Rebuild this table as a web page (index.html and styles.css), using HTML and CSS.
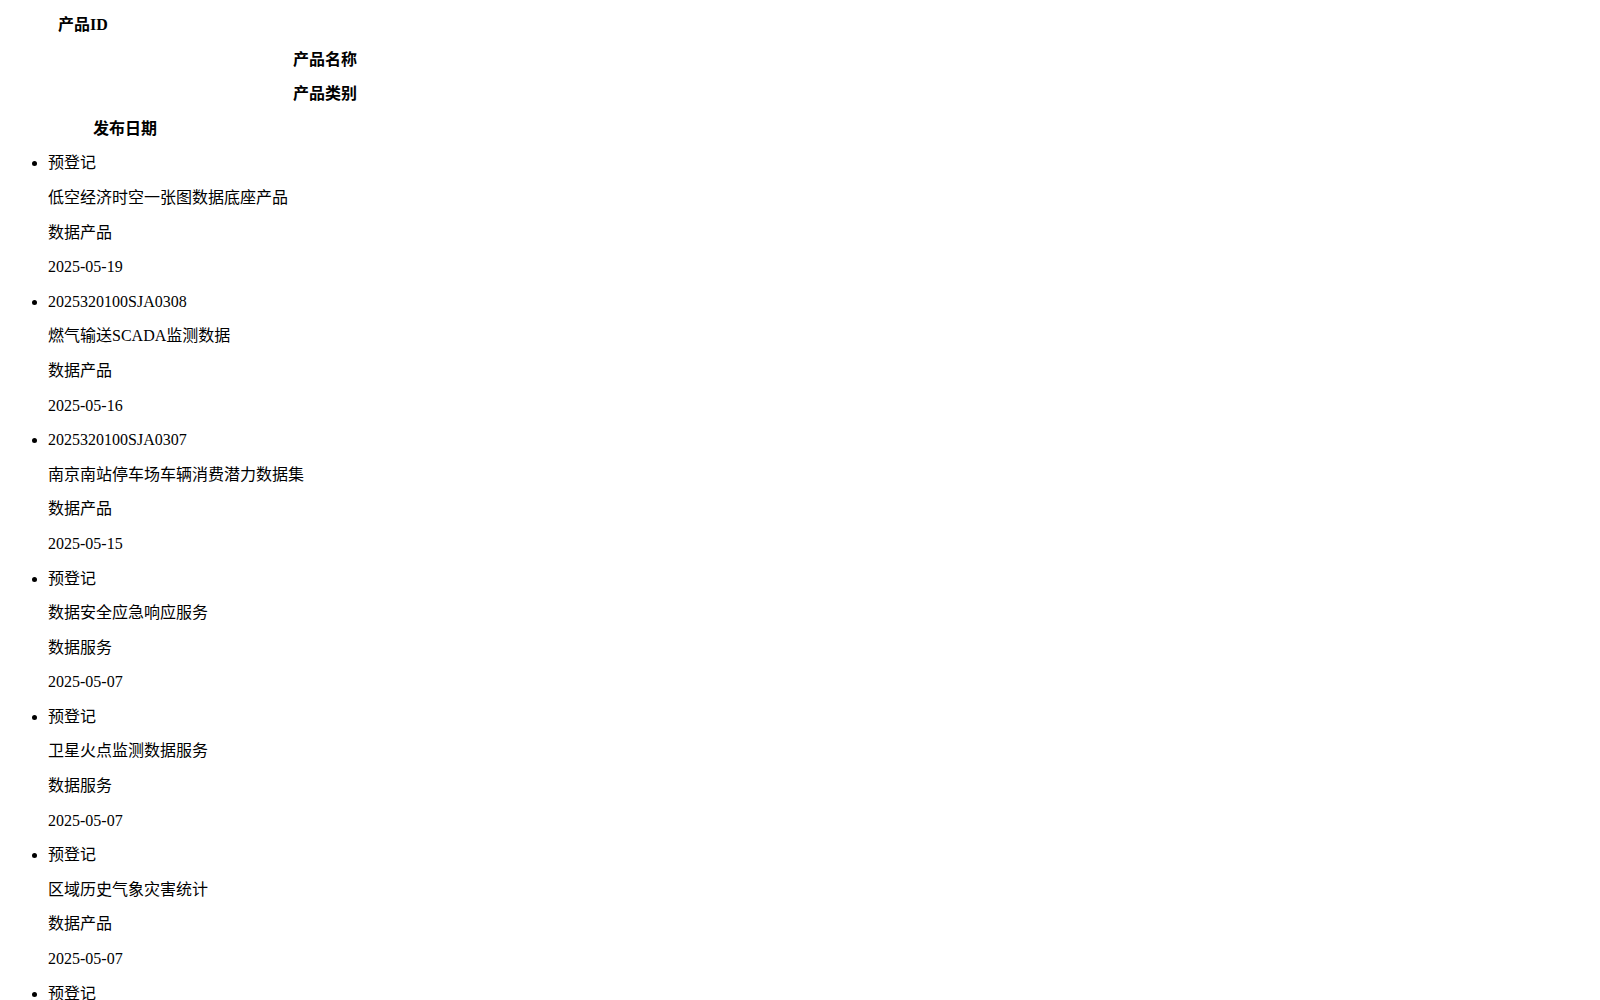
FILE: index.html
```html
<!DOCTYPE html>
<html lang="zh-CN">
<head>
<meta charset="utf-8">
<title>产品列表</title>
<link rel="stylesheet" href="styles.css">
</head>
<body>
<div class="thead">
  <p class="th th-id">产品ID</p>
  <p class="th th-name">产品名称</p>
  <p class="th th-type">产品类别</p>
  <p class="th th-date">发布日期</p>
</div>
<ul class="list">
  <li><p>预登记</p><p>低空经济时空一张图数据底座产品</p><p>数据产品</p><p>2025-05-19</p></li>
  <li><p>2025320100SJA0308</p><p>燃气输送SCADA监测数据</p><p>数据产品</p><p>2025-05-16</p></li>
  <li><p>2025320100SJA0307</p><p>南京南站停车场车辆消费潜力数据集</p><p>数据产品</p><p>2025-05-15</p></li>
  <li><p>预登记</p><p>数据安全应急响应服务</p><p>数据服务</p><p>2025-05-07</p></li>
  <li><p>预登记</p><p>卫星火点监测数据服务</p><p>数据服务</p><p>2025-05-07</p></li>
  <li><p>预登记</p><p>区域历史气象灾害统计</p><p>数据产品</p><p>2025-05-07</p></li>
  <li><p>预登记</p><p>城市内涝风险评估数据</p><p>数据产品</p><p>2025-05-06</p></li>
  <li><p>2025320100SJA0306</p><p>公共交通客流分析数据集</p><p>数据产品</p><p>2025-04-30</p></li>
  <li><p>2025320100SJA0305</p><p>企业用电行为分析数据</p><p>数据产品</p><p>2025-04-28</p></li>
  <li><p>预登记</p><p>数据合规咨询服务</p><p>数据服务</p><p>2025-04-25</p></li>
  <li><p>2025320100SJA0304</p><p>新能源汽车充电桩运营数据</p><p>数据产品</p><p>2025-04-22</p></li>
  <li><p>预登记</p><p>遥感影像解译数据服务</p><p>数据服务</p><p>2025-04-18</p></li>
</ul>
</body>
</html>
```

FILE: styles.css
```css
html {
  overflow-y: scroll;
}
body {
  margin: 0 8px 8px;
  font-family: "Liberation Serif", "Noto Sans CJK SC", serif;
  font-size: 16px;
  line-height: 18.6px;
  color: #000;
  background: #fff;
}
.th {
  font-weight: bold;
  text-align: center;
}
.th-id { width: 150px; }
.th-name { width: 634px; }
.th-type { width: 634px; }
.th-date { width: 234px; }
.list {
  padding-left: 40px;
}
```
